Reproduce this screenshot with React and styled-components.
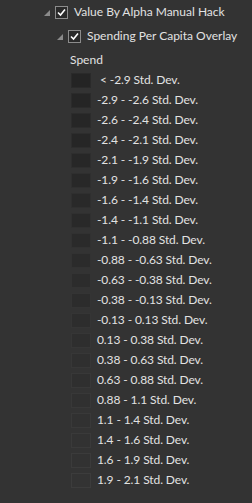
import styled, { createGlobalStyle } from "styled-components";

const GlobalStyle = createGlobalStyle`
  html, body {
    margin: 0;
    padding: 0;
    background: #333333;
  }
  body {
    font-family: Lato, "Noto Sans", sans-serif;
    font-size: 12px;
    color: #e2e2e2;
  }
`;

const Panel = styled.div`
  width: 252px;
  height: 503px;
  background: #333333;
  display: flex;
  flex-direction: column;
  overflow: hidden;
`;

const TreeRow = styled.div`
  display: flex;
  align-items: center;
  height: 24px;
  padding-left: ${props => props.indent}px;
`;

const Arrow = styled.svg`
  width: 6px;
  height: 6px;
  margin-top: 2px;
  margin-right: 5px;
  flex: none;
`;

const CheckBox = styled.span`
  width: 13px;
  height: 13px;
  box-sizing: border-box;
  border: 1px solid #8c8c8c;
  background: #2a2a2a;
  display: flex;
  align-items: center;
  justify-content: center;
  margin-right: 6px;
  flex: none;
`;

const Label = styled.span`
  white-space: nowrap;
  line-height: 16px;
  letter-spacing: ${props => (props.tight ? "-0.1px" : "0")};
`;

const Heading = styled.div`
  height: 22px;
  display: flex;
  align-items: center;
  padding-left: 70px;
`;

const LegendList = styled.div`
  display: flex;
  flex-direction: column;
  padding-left: 71px;
`;

const LegendRow = styled.div`
  display: flex;
  align-items: center;
  height: 20px;
`;

const Swatch = styled.span`
  width: 20px;
  height: 15px;
  box-sizing: border-box;
  border: 1px solid ${props => props.edge};
  background: ${props => props.fill};
  margin-right: ${props => props.gap}px;
  flex: none;
`;

const ranges = [
  "< -2.9 Std. Dev.",
  "-2.9 - -2.6 Std. Dev.",
  "-2.6 - -2.4 Std. Dev.",
  "-2.4 - -2.1 Std. Dev.",
  "-2.1 - -1.9 Std. Dev.",
  "-1.9 - -1.6 Std. Dev.",
  "-1.6 - -1.4 Std. Dev.",
  "-1.4 - -1.1 Std. Dev.",
  "-1.1 - -0.88 Std. Dev.",
  "-0.88 - -0.63 Std. Dev.",
  "-0.63 - -0.38 Std. Dev.",
  "-0.38 - -0.13 Std. Dev.",
  "-0.13 - 0.13 Std. Dev.",
  "0.13 - 0.38 Std. Dev.",
  "0.38 - 0.63 Std. Dev.",
  "0.63 - 0.88 Std. Dev.",
  "0.88 - 1.1 Std. Dev.",
  "1.1 - 1.4 Std. Dev.",
  "1.4 - 1.6 Std. Dev.",
  "1.6 - 1.9 Std. Dev.",
  "1.9 - 2.1 Std. Dev.",
];

const grey = (v) => {
  const h = Math.round(v).toString(16).padStart(2, "0");
  return `#${h}${h}${h}`;
};

const Expander = () => (
  <Arrow viewBox="0 0 6 6">
    <polygon points="6,0 6,6 0,6" fill="#8a8a8a" />
  </Arrow>
);

const Check = () => (
  <CheckBox>
    <svg width="9" height="9" viewBox="0 0 9 9">
      <polyline points="1,4.5 3.5,7 8,1.5" fill="none" stroke="#ffffff" strokeWidth="1.6" />
    </svg>
  </CheckBox>
);

const App = () => {
  return (
    <>
      <GlobalStyle />
      <Panel>
        <TreeRow indent={44}>
          <Expander />
          <Check />
          <Label>Value By Alpha Manual Hack</Label>
        </TreeRow>
        <TreeRow indent={57}>
          <Expander />
          <Check />
          <Label>Spending Per Capita Overlay</Label>
        </TreeRow>
        <Heading>Spend</Heading>
        <LegendList>
          {ranges.map((text, idx) => {
            const t = idx / (ranges.length - 1);
            return (
              <LegendRow key={text}>
                <Swatch
                  fill={grey(0x24 + t * (0x33 - 0x24))}
                  edge={grey(0x2a + t * (0x3c - 0x2a))}
                  gap={idx === 0 ? 9 : 6}
                />
                <Label tight>{text}</Label>
              </LegendRow>
            );
          })}
        </LegendList>
      </Panel>
    </>
  );
};

export default App;
